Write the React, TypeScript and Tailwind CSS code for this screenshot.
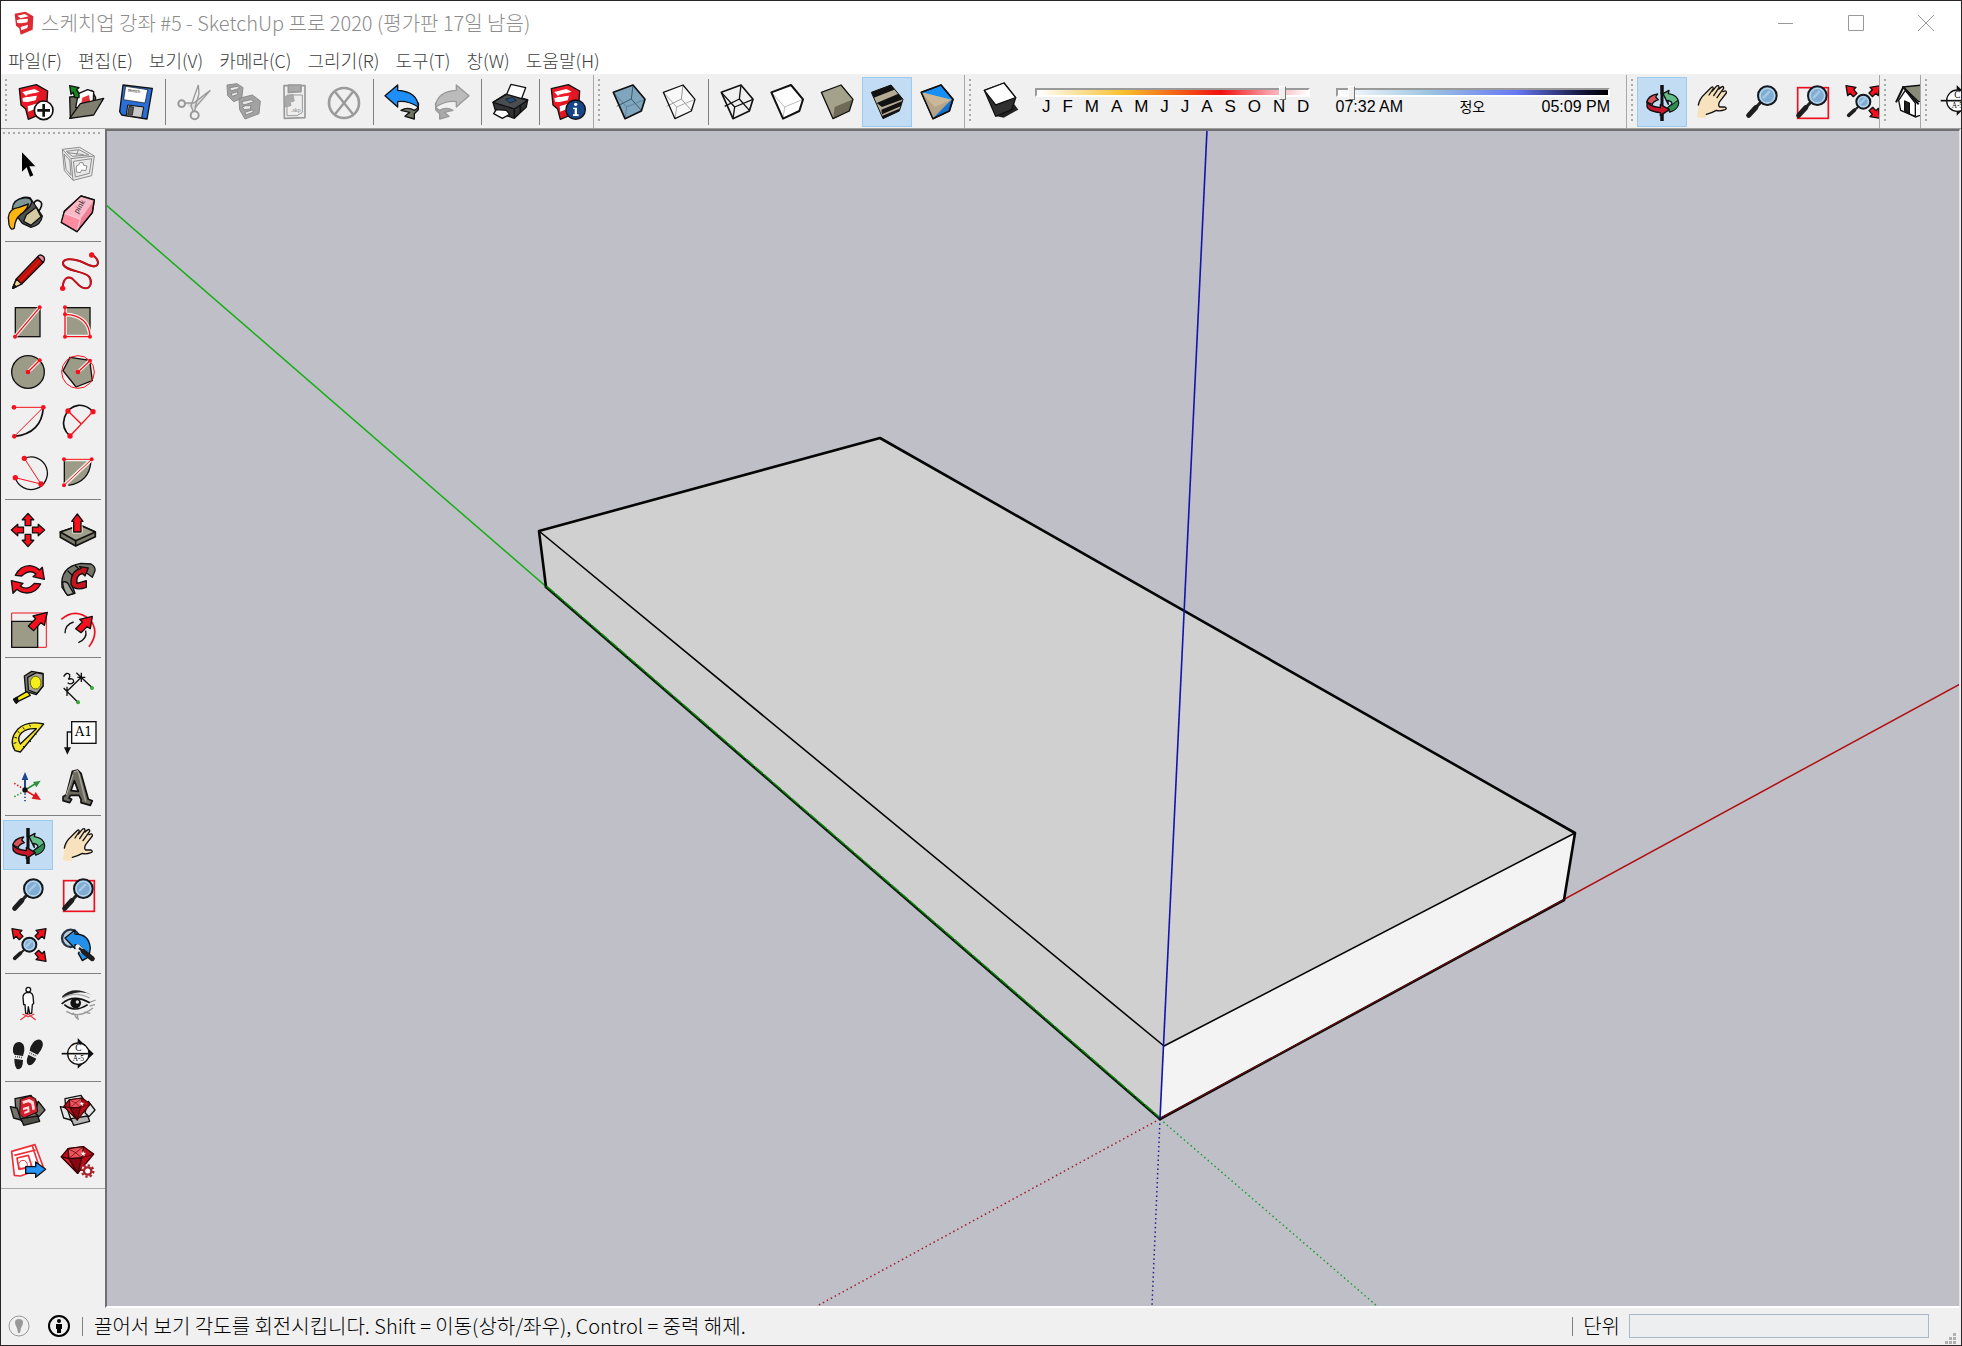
import React from 'react';

type Node = React.ReactNode;

const INK = '#111';
const RED = '#f4101c';
const STONE = '#9c9b87';

function Dot({ x, y, r = 7 }: { x: number; y: number; r?: number }) {
  return <circle cx={x} cy={y} r={r} fill={RED} />;
}

function BlockArrow({ at }: { at: string }) {
  return <path transform={at} d="M0-52 18-32H9V-14H-9V-32H-18Z" fill={RED} stroke={INK} strokeWidth="4" strokeLinejoin="round" />;
}

function SketchLogo({ red = '#f01826', light = '#fff' }: { red?: string; light?: string }) {
  return (
    <g strokeLinejoin="round">
      <path d="M25 35 76 23 110 42 106 104 52 127 44 96 30 84Z" fill={red} stroke={INK} strokeWidth="4" />
      <path d="M76 23 110 42 106 104 52 127 54 70 88 66Z" fill="#000" opacity=".06" />
      <path d="M34 45 70 36 86 44 44 56Z M34 64 46 60 78 56 74 70 50 75 36 74Z M50 88 82 78 80 92 52 104Z" fill={light} />
      <path d="M48 53 66 49 76 54 50 60Z" fill={red} />
    </g>
  );
}

function TitleLogo() {
  return (
    <svg viewBox="0 0 60 72" className="h-6 w-5">
      <path d="M2 8 34 2 58 16 56 56 20 71 16 52 6 44Z" fill="#dd2a33" />
      <path d="M10 14 32 9 44 16 20 22ZM8 28 18 25 42 23 40 34 22 37 10 36ZM20 48 42 41 40 51 22 58Z" fill="#fff" />
    </svg>
  );
}

function Lens({ cx, cy, r, hx, hy, w = 15 }: { cx: number; cy: number; r: number; hx: number; hy: number; w?: number }) {
  const k = 0.72;
  return (
    <g strokeLinecap="round">
      <path d={`M${cx - r * k} ${cy + r * k} L${hx} ${hy}`} stroke="#222" strokeWidth={w * 0.6} />
      <path d={`M${(cx - r * k) * 0.6 + hx * 0.4} ${(cy + r * k) * 0.6 + hy * 0.4} L${hx} ${hy}`} stroke="#1d1d1f" strokeWidth={w} />
      <circle cx={cx} cy={cy} r={r} fill="#82add2" stroke="#17181c" strokeWidth="6" />
      <circle cx={cx} cy={cy} r={r - 6} fill="none" stroke="#b6d6ee" strokeWidth="4" />
      <path d={`M${cx - r * 0.4} ${cy + r * 0.2} L${cx + r * 0.2} ${cy - r * 0.4}`} stroke="#a5cae6" strokeWidth="7" />
    </g>
  );
}

function OutArrow({ at }: { at: string }) {
  return <path transform={at} d="M0 0 30 5 23 12 33 23 22 33 12 23 5 30Z" fill={RED} stroke={INK} strokeWidth="4" strokeLinejoin="round" />;
}

function Cube({ fill, side, lw = 5, back, front, inner = 2 }: { fill: string; side?: string; lw?: number; back?: string; front?: string; inner?: number }) {
  return (
    <g strokeLinejoin="round" fill="none">
      <path d="M28 46 87 24 123 67 112 102 63 125Z" fill={fill} />
      {side && <path d="M68 90 123 67 112 102 63 125Z" fill={side} />}
      {back && <path d="M87 24 82 66 38 88M82 66 112 100" stroke={back} strokeWidth={inner} />}
      {front && <path d="M28 46 68 90 123 67M68 90 63 125" stroke={front} strokeWidth={inner} />}
      <path d="M28 46 87 24 123 67 112 102 63 125Z" stroke={INK} strokeWidth={lw} />
    </g>
  );
}

const boxFlaps = (tone: string, dark: string) => (
  <g stroke={INK} strokeWidth="4" strokeLinejoin="round">
    <path d="M38 66 36 38 84 28 92 40 114 58 104 96 56 106Z" fill={tone} />
    <path d="M22 62 42 66 54 102 32 96Z" fill={tone} />
    <path d="M106 46 126 72 108 92 96 80Z" fill={tone} />
    <path d="M54 98 104 90 110 106 62 118Z" fill={dark} />
  </g>
);

const gem = (
  <g stroke="#3a0205" strokeWidth="4" strokeLinejoin="round">
    <path d="M25 62 45 38 92 32 122 54 74 112Z" fill="#b80e18" />
    <path d="M45 38 92 32 86 66 48 68Z" fill="#f0545a" />
    <path d="M25 62 48 68 74 112Z" fill="#d91f2a" />
    <path d="M48 68 86 66 74 112Z" fill="#8a0710" />
    <path d="M45 38 68 50 92 32M68 50 48 68M68 50 86 66 122 54" fill="none" strokeWidth="2" />
    <path d="M90 44 93 50 99 51 94 55 95 61 90 57 85 60 87 54 83 50 88 50Z" fill="#fff" stroke="none" />
  </g>
);

const orbit = (
  <g strokeLinejoin="round">
    <path d="M75 24V132" stroke={INK} strokeWidth="9" />
    <path d="M78 50 96 40 94 50Q124 54 125 78 122 98 98 105L92 92 104 82Q108 74 92 70L94 82Z" fill="#62bd86" stroke={INK} strokeWidth="4" />
    <path d="M125 78Q124 98 98 105L92 92 104 84 122 70Z" fill="#2f8c53" stroke={INK} strokeWidth="3" />
    <path d="M30 76Q32 56 62 51L56 60 64 68Q48 74 46 82Z" fill="#d8545a" stroke={INK} strokeWidth="4" />
    <path d="M30 72Q34 88 70 92V82L97 98 70 116V107Q30 102 30 86Z" fill="#c9162b" stroke={INK} strokeWidth="4" />
    <path d="M75 24V52M75 110V132" stroke={INK} strokeWidth="9" />
  </g>
);

const hand = (
  <g strokeLinejoin="round" strokeLinecap="round">
    <path d="M30 120Q34 98 34 82 38 64 54 50L72 32Q80 26 78 36L66 54 88 30Q96 22 96 32L80 56 102 32Q110 26 110 34L90 62 112 42Q120 38 118 48L98 74Q92 86 98 90L114 90Q122 94 114 98 98 104 88 100 74 108 58 112L56 124Z" fill="#f8e2bd" />
    <path d="M34 84Q38 64 54 50L72 32Q80 26 78 36L66 54M76 42 88 28Q96 22 96 32L80 56M96 36Q110 22 110 34L90 62M108 44Q120 38 118 48L98 74Q92 86 98 90L114 90Q122 94 114 98 98 104 88 100 74 108 58 112" fill="none" stroke={INK} strokeWidth="4" />
  </g>
);

const zoom = <Lens cx={91} cy={56} r={28} hx={35} hy={115} />;

const zoomWindow = (
  <g>
    <rect x="32" y="32" width="92" height="92" fill="none" stroke="#ee1020" strokeWidth="5" />
    <Lens cx={91} cy={56} r={28} hx={35} hy={115} />
  </g>
);

const extents = (
  <g>
    <Lens cx={79} cy={74} r={21} hx={35} hy={115} w={11} />
    <OutArrow at="translate(27 26)" />
    <OutArrow at="translate(129 26) rotate(90)" />
    <OutArrow at="translate(129 124) rotate(180)" />
  </g>
);

const section = (
  <g>
    <path d="M74 30 122 77 74 122Z" fill={INK} />
    <circle cx="76" cy="77" r="32" fill="#fff" stroke={INK} strokeWidth="4" />
    <path d="M26 77H118" stroke={INK} strokeWidth="5" />
    <text x="76" y="70" textAnchor="middle" fontSize="28" fontFamily="Liberation Serif, serif">C</text>
    <text x="76" y="100" textAnchor="middle" fontSize="22" fontFamily="Liberation Serif, serif">A-5</text>
  </g>
);

const stripes = (
  <g>
    <clipPath id="cubeClip"><path d="M28 46 87 24 123 67 112 102 63 125Z" /></clipPath>
    <g clipPath="url(#cubeClip)">
      <path d="M20 20H130V130H20Z" fill="#b3ab94" />
      <path d="M20 46 96 17 108 34 32 64ZM44 78 113 49 124 66 60 90ZM58 98 130 68V82L60 112ZM58 118 124 90 120 100 60 128Z" fill={INK} />
    </g>
    <path d="M28 46 87 24 123 67 112 102 63 125Z" fill="none" stroke={INK} strokeWidth="3" />
  </g>
);

const ICONS: Record<string, Node> = {
  select: <path d="M57 43V101L71 88 81 116 91 112 79 85H97Z" fill="#000" />,
  component: (
    <g fill="none" stroke="#8c8c8c" strokeWidth="3" strokeLinejoin="round">
      <path d="M28 34 80 28 124 54 116 113 60 127 34 98Z" fill="#e9e9e9" />
      <path d="M28 34 54 62 124 54M54 62 60 127M61 70 116 62 109 106 67 117ZM40 40 78 35 108 51 58 55ZM33 48 50 66 54 112 39 94Z" />
      <path d="M70 84 78 80 80 74H90L92 82 102 84 98 98 86 96 82 104 70 102Z" fill="#fff" />
      <path d="M44 44 92 50M76 36 70 52" />
    </g>
  ),
  paint: (
    <g stroke={INK} strokeWidth="4" strokeLinejoin="round">
      <path d="M90 54Q94 34 108 38 122 44 112 62L98 82" fill="none" strokeWidth="5" />
      <path d="M36 44Q58 22 82 30L118 84Q114 112 84 118L58 106 34 74Z" fill="#4d5150" />
      <path d="M70 80 100 58 114 86 84 112 62 100Z" fill="#d4cba2" />
      <path d="M28 62Q30 34 62 30 88 28 86 44 78 66 48 76Z" fill="#7e9797" />
      <path d="M16 88Q18 62 48 58L76 48Q72 68 52 80 36 92 34 120 24 130 18 110Z" fill="#ffb510" />
    </g>
  ),
  eraser: (
    <g stroke={INK} strokeWidth="4" strokeLinejoin="round">
      <path d="M84 24 124 36 118 74 72 131 25 103 34 70Z" fill="#ee7f95" />
      <path d="M84 24 124 36 82 94 34 76Z" fill="#fbb9c8" stroke="none" />
      <path d="M34 76 82 94 72 131 25 103Z" fill="#ff8ba1" stroke="#fff" strokeWidth="2" />
      <path d="M84 24 124 36 118 74 72 131 25 103 34 70Z" fill="none" />
      <text transform="translate(74 78) rotate(-58)" fontSize="25" stroke="none" fill="#222" fontFamily="Liberation Serif, serif">pink</text>
    </g>
  ),
  pencil: (
    <g stroke={INK} strokeWidth="4" strokeLinejoin="round">
      <path d="M29 127 40 99 104 32 122 48 56 114Z" fill="#d3150c" />
      <path d="M29 127 40 99 56 114Z" fill="#f1d49b" />
      <path d="M29 127 33 116 40 122Z" fill={INK} />
      <path d="M46 103 110 38M54 110 118 44" strokeWidth="2" stroke="#7b0500" />
      <path d="M104 32Q112 22 122 32 128 42 120 49Z" fill="#e889a0" />
    </g>
  ),
  freehand: (
    <g>
      <path d="M29 127C30 95 45 90 58 98 70 108 80 127 97 127 115 127 118 105 108 92 95 75 30 75 30 52 30 35 60 38 80 45 100 52 120 68 132 58 140 48 130 32 116 27" fill="none" stroke="#8a0d14" strokeWidth="6" />
      <path d="M29 127C30 95 45 90 58 98 70 108 80 127 97 127 115 127 118 105 108 92 95 75 30 75 30 52 30 35 60 38 80 45 100 52 120 68 132 58 140 48 130 32 116 27" fill="none" stroke="#d8101c" strokeWidth="4" />
      <Dot x={29} y={127} r={8} /><Dot x={116} y={27} r={8} />
    </g>
  ),
  rectangle: (
    <g>
      <rect x="37" y="35" width="74" height="87" fill={STONE} stroke={INK} strokeWidth="4" />
      <path d="M36 122 110 34" stroke="#f5f0ea" strokeWidth="11" />
      <path d="M36 122 110 34" stroke={RED} strokeWidth="4" />
      <Dot x={36} y={122} r={6} /><Dot x={110} y={34} r={6} />
    </g>
  ),
  rotatedRect: (
    <g fill="none">
      <rect x="37" y="35" width="74" height="87" fill={STONE} stroke={INK} strokeWidth="4" />
      <path d="M36 34V122H111Q108 58 36 55" stroke="#f5f0ea" strokeWidth="11" />
      <path d="M36 34V122H111Q108 58 36 55" stroke={RED} strokeWidth="4" />
      <Dot x={36} y={34} r={6} /><Dot x={36} y={55} r={6} /><Dot x={36} y={122} r={6} /><Dot x={111} y={122} r={6} />
    </g>
  ),
  circle: (
    <g>
      <circle cx="75" cy="78" r="49" fill={STONE} stroke={INK} strokeWidth="4" />
      <path d="M75 78 110 43" stroke="#f5f0ea" strokeWidth="11" />
      <path d="M75 78 110 43" stroke={RED} strokeWidth="4" />
      <Dot x={75} y={78} /><Dot x={110} y={43} r={6} />
    </g>
  ),
  polygon: (
    <g>
      <path d="M51 34 110 43 118 104 69 123 30 74Z" fill={STONE} stroke={INK} strokeWidth="4" />
      <circle cx="75" cy="78" r="49" fill="none" stroke={RED} strokeWidth="3" />
      <path d="M75 78 111 44" stroke="#f5f0ea" strokeWidth="11" />
      <path d="M75 78 111 44" stroke={RED} strokeWidth="4" />
      <Dot x={75} y={78} /><Dot x={111} y={44} r={6} />
    </g>
  ),
  arc: (
    <g fill="none">
      <path d="M121 34Q116 112 34 121" stroke={INK} strokeWidth="5" />
      <path d="M33 34H121L34 121" stroke={RED} strokeWidth="3" />
      <Dot x={33} y={34} /><Dot x={121} y={34} /><Dot x={34} y={121} />
    </g>
  ),
  twoPointArc: (
    <g fill="none">
      <path d="M51 120C14 88 36 32 76 28 96 26 108 34 120 47" stroke={INK} strokeWidth="5" />
      <path d="M45 45 84 83M120 47 51 120" stroke={RED} strokeWidth="4" />
      <Dot x={45} y={45} r={8} /><Dot x={120} y={47} r={8} /><Dot x={51} y={120} r={8} />
    </g>
  ),
  threePointArc: (
    <g fill="none">
      <path d="M64 37A49 49 0 1 1 37 95" stroke={INK} strokeWidth="4" />
      <path d="M64 37 114 114 37 95" stroke={RED} strokeWidth="3" />
      <Dot x={64} y={37} r={8} /><Dot x={114} y={114} r={8} /><Dot x={37} y={95} r={8} />
    </g>
  ),
  pie: (
    <g fill="none">
      <path d="M35 44H114Q110 108 46 118L35 112Z" fill={STONE} />
      <path d="M114 44Q110 108 46 118M34 44V112" stroke={INK} strokeWidth="4" />
      <path d="M33 118 116 40H33" stroke="#f5f0ea" strokeWidth="11" />
      <path d="M33 118 116 40H33" stroke={RED} strokeWidth="3" />
      <Dot x={33} y={118} r={6} /><Dot x={116} y={40} r={6} /><Dot x={33} y={40} r={6} />
    </g>
  ),
  move: (
    <g>
      <BlockArrow at="translate(75 78) scale(.96)" />
      <BlockArrow at="translate(75 78) rotate(90) scale(.96)" />
      <BlockArrow at="translate(75 78) rotate(180) scale(.96)" />
      <BlockArrow at="translate(75 78) rotate(270) scale(.96)" />
    </g>
  ),
  pushPull: (
    <g stroke={INK} strokeWidth="5" strokeLinejoin="round">
      <path d="M22 84 82 64 127 84V98L68 126 22 100Z" fill="#7b7b6a" />
      <path d="M22 84 82 64 127 84 68 110Z" fill="#a09f8c" />
      <path d="M68 110V126" />
      <path d="M73 30 90 52H84V84H62V52H56Z" fill={RED} stroke="#f4f0ea" strokeWidth="9" />
      <path d="M73 30 90 52H84V84H62V52H56Z" fill={RED} strokeWidth="4" />
    </g>
  ),
  rotate: (
    <g fill={RED} stroke={INK} strokeWidth="4" strokeLinejoin="round">
      <path d="M37 64Q52 34 82 35 100 38 110 48L118 40 124 76 90 68 99 60Q80 44 56 66Z" />
      <path d="M113 90Q100 116 72 117 52 116 42 106L30 118 25 80 60 88 52 96Q72 112 94 88Z" />
    </g>
  ),
  followMe: (
    <g stroke={INK} strokeWidth="4" strokeLinejoin="round">
      <path d="M27 100Q20 38 84 28L114 30Q128 38 126 50L118 70 102 58Q62 56 58 96L66 118 44 124Z" fill="#74766b" />
      <path d="M54 92Q52 50 84 44L80 38 106 42 96 66 88 58Q68 64 72 88L100 80V100Q66 112 54 92Z" fill="#c3161e" />
      <path d="M44 50 60 66M66 34 78 46" fill="none" />
      <path d="M29 84Q42 80 48 94L62 118 44 124Q30 110 29 84Z" fill="#a4a49c" />
    </g>
  ),
  scale: (
    <g strokeLinejoin="round">
      <rect x="26" y="27" width="104" height="103" fill="none" stroke={RED} strokeWidth="3" />
      <rect x="26" y="52" width="78" height="78" fill={STONE} stroke={INK} strokeWidth="4" />
      <path d="M133 25 124 64 114 56 92 80 76 66 98 44 90 36Z" fill={RED} stroke={INK} strokeWidth="4" />
    </g>
  ),
  offset: (
    <g fill="none" strokeLinejoin="round">
      <path d="M25 46Q66 10 110 46 142 84 108 128" stroke="#ee1020" strokeWidth="5" />
      <path d="M36 88Q36 62 62 54M98 80Q104 104 76 116" stroke={INK} strokeWidth="4" />
      <path d="M118 37 112 74 102 68 84 86 68 74 88 54 80 46Z" fill={RED} stroke={INK} strokeWidth="4" />
    </g>
  ),
  tape: (
    <g stroke={INK} strokeWidth="4" strokeLinejoin="round">
      <path d="M32 112 72 88 82 100 38 122Z" fill="#f4e90b" />
      <path d="M32 112 42 106 46 118 40 124Z" fill={INK} />
      <path d="M64 42 86 28 120 34V72L100 98 68 88Z" fill="#7c7c72" />
      <path d="M74 46 100 32 120 36V72L102 94 76 84Z" fill="#a3a399" />
      <ellipse cx="98" cy="62" rx="16" ry="19" fill="#f4ef19" stroke="#6b6b00" strokeWidth="3" />
    </g>
  ),
  dimension: (
    <g stroke={INK} strokeWidth="4" fill="none">
      <path d="M42 88 85 46M34 80 74 120M70 32 116 76M32 78 52 98M42 74V102M73 46H97M85 32V60" />
      <path d="M32 44Q40 28 50 38 52 46 46 52 62 46 62 60 54 70 44 62" strokeWidth="4" />
      <circle cx="75" cy="121" r="6" fill="#3ca53c" stroke="none" /><circle cx="117" cy="78" r="6" fill="#3ca53c" stroke="none" />
    </g>
  ),
  protractor: (
    <g stroke={INK} strokeWidth="4" strokeLinejoin="round">
      <path fillRule="evenodd" d="M122 36Q72 24 44 52 16 84 36 116L52 120ZM100 50 52 96Q40 78 56 62 72 48 100 50Z" fill="#f3e52a" />
      <path d="M44 58 50 63M34 76 42 78M32 94 40 92M60 46 64 52M80 38 82 44M60 102 66 108M78 84 84 90M96 64 100 68" strokeWidth="3" />
    </g>
  ),
  text: (
    <g>
      <rect x="56" y="29" width="73" height="65" fill="#fff" stroke={INK} strokeWidth="4" />
      <path d="M56 60H43V110" fill="none" stroke={INK} strokeWidth="4" />
      <path d="M33 106H54L43 128Z" fill={INK} />
      <text x="92" y="72" textAnchor="middle" fontSize="38" fontFamily="DejaVu Serif, serif">A1</text>
    </g>
  ),
  axes: (
    <g fill="none" strokeWidth="5">
      <path d="M66 84V44" stroke="#1e4693" strokeWidth="6" /><path d="M66 30 76 54H56Z" fill="#1e4693" />
      <path d="M66 84 100 64" stroke="#2e8f3c" /><path d="M113 56 100 76 90 60Z" fill="#2e8f3c" />
      <path d="M66 84 98 104" stroke="#e0141e" /><path d="M114 114 86 110 98 90Z" fill="#e0141e" />
      <path d="M34 64 60 80" stroke="#e0141e" strokeDasharray="4 6" />
      <path d="M34 104 60 90" stroke="#2e8f3c" strokeDasharray="4 6" />
      <path d="M66 94V124" stroke="#1e4693" strokeDasharray="4 6" />
      <circle cx="66" cy="84" r="8" fill={INK} />
    </g>
  ),
  text3d: (
    <g stroke={INK} strokeWidth="5" strokeLinejoin="round">
      <path fillRule="evenodd" d="M58 28 74 24 84 34 106 112 118 116 112 130 84 122V112L78 100H52L48 108 56 112 50 122 30 116V104L40 98ZM64 56 54 86 76 88Z" fill="#6d6b60" />
      <path d="M62 30 74 26 78 36 98 118M40 100 60 38" fill="none" stroke="#aaa89a" strokeWidth="4" />
    </g>
  ),
  orbit,
  hand,
  zoom,
  zoomWindow,
  extents,
  previous: (
    <g strokeLinejoin="round">
      <circle cx="53" cy="55" r="26" fill="#b9cde0" stroke="#2b3440" strokeWidth="7" />
      <path d="M36 54 66 30V42Q108 42 112 84L108 110 88 122 76 100 86 84Q80 74 66 74V86Z" fill="#2390ea" stroke={INK} strokeWidth="4" />
      <path d="M74 80 88 94" stroke="#f0f0f0" strokeWidth="14" strokeLinecap="round" />
      <path d="M78 84 88 92" stroke="#222" strokeWidth="7" />
      <path d="M90 94 118 116" stroke="#1d1d1f" strokeWidth="15" strokeLinecap="round" />
    </g>
  ),
  person: (
    <g stroke={INK} strokeWidth="4" strokeLinejoin="round" fill="none">
      <path d="M52 126 76 108 98 126M58 108 76 116 94 108" stroke="#e84048" />
      <path d="M70 44Q60 48 60 58L62 80H66L68 106H74L76 86 80 106H86L88 80 92 76 90 54Q88 46 82 44Z" fill="#fff" />
      <circle cx="76" cy="35" r="7" fill="#fff" />
    </g>
  ),
  eye: (
    <g fill="none">
      <path d="M40 100Q78 124 120 90M60 104 72 122M72 110 76 126M94 102 112 106M108 74 128 66M110 84 126 80" stroke="#999" strokeWidth="4" />
      <path d="M28 54Q62 20 118 52 86 34 48 50L28 60Z" fill="#222" />
      <path d="M30 60Q66 38 110 60" stroke="#aaa" strokeWidth="4" />
      <path d="M30 76Q66 44 104 76 76 108 48 92Z" fill="#e8e8e8" />
      <path d="M26 78Q60 46 110 74M34 80Q64 106 104 80" stroke={INK} strokeWidth="5" />
      <circle cx="68" cy="75" r="16" fill={INK} /><circle cx="73" cy="72" r="5" fill="#ddd" />
    </g>
  ),
  walk: (
    <g fill="#1c1c1c">
      <path d="M30 60Q34 40 50 42 66 46 64 68L60 84 34 80Q28 72 30 60ZM34 92 60 96Q60 122 46 124 34 122 34 92Z" />
      <path d="M94 40Q106 30 116 38 124 48 114 66L104 80 80 68Q82 52 94 40ZM76 80 100 92Q90 112 78 112 66 106 76 80Z" />
      <path d="M36 86 60 89M79 74 101 85" stroke="#555" strokeWidth="5" strokeDasharray="3 3" />
    </g>
  ),
  section,
  warehouse: (
    <g>
      {boxFlaps('#74746a', '#50504a')}
      <path d="M52 40 80 30 98 38 104 78 62 96 50 84Z" fill="#d51f2c" stroke={INK} strokeWidth="3" />
      <path d="M58 46 78 39 92 46 96 70 88 73 85 53 76 49 60 54ZM60 66 78 60 80 78 64 84V77L73 74V69L60 73Z" fill="#fbdcdc" />
    </g>
  ),
  extensionWarehouse: (
    <g>{boxFlaps('#e4e4e4', '#b4b4b4')}<g transform="translate(12 10) scale(.82)">{gem}</g></g>
  ),
  layout: (
    <g strokeLinejoin="round">
      <path d="M26 46 96 26 122 96 52 120 34 118Z" fill="#fff" stroke="#ee3038" strokeWidth="5" />
      <path d="M34 58 98 42M88 30 108 90M42 66 76 58 86 90 48 100Z" fill="none" stroke="#ee3038" strokeWidth="5" />
      <circle cx="60" cy="86" r="13" fill="none" stroke="#ee3038" strokeWidth="3" />
      <path d="M68 92H98V78L128 100 98 124V112H68Z" fill="#2592f5" stroke={INK} strokeWidth="4" />
    </g>
  ),
  extensions: (
    <g>
      {gem}
      <circle cx="104" cy="105" r="20" fill="#f0f0f0" />
      <circle cx="104" cy="105" r="17" fill="none" stroke="#a3222b" strokeWidth="7" strokeDasharray="7 6" />
      <circle cx="104" cy="105" r="11" fill="#fff" stroke="#a3222b" strokeWidth="7" />
    </g>
  ),
  new: (
    <g><SketchLogo /><circle cx="98" cy="100" r="28" fill="#fff" stroke={INK} strokeWidth="5" /><path d="M98 81V119M79 100H117" stroke={INK} strokeWidth="8" /></g>
  ),
  open: (
    <g stroke={INK} strokeWidth="4" strokeLinejoin="round">
      <path d="M26 60 50 58 54 50 92 40 104 62 98 100 28 124Z" fill="#6f6f62" />
      <path d="M52 50 80 38 98 44 96 92H44Z" fill="#fff" />
      <path d="M64 62 84 54 88 78 60 84Z" fill="#ea3037" stroke="none" />
      <path d="M26 124 58 80 128 64 98 114Z" fill="#807f70" />
      <path d="M26 26 54 32 46 38Q56 46 54 62H42L36 46 30 52Z" fill="#128a1c" />
    </g>
  ),
  save: (
    <g stroke={INK} strokeWidth="4" strokeLinejoin="round">
      <path d="M36 24 124 34 108 126 32 114 26 104Z" fill="#2a6fd8" />
      <path d="M44 28 110 38 102 78 38 68Z" fill="#fff" strokeWidth="2" />
      <text transform="translate(50 43) rotate(8)" fontSize="13" stroke="none" fontFamily="Liberation Sans, sans-serif">sketch</text>
      <path d="M50 84 98 90 92 122 46 116Z" fill="#c9c9c9" strokeWidth="3" />
      <path d="M54 88 68 90 64 115 50 113Z" fill="#555" strokeWidth="2" />
    </g>
  ),
  cut: (
    <g fill="none" stroke="#999" strokeWidth="6">
      <circle cx="38" cy="80" r="10" /><circle cx="77" cy="115" r="12" />
      <path d="M48 78 74 78 124 40 82 88 76 102" fill="#ddd" strokeWidth="4" /><path d="M88 24 66 86 72 102M88 24 90 50 78 92" strokeWidth="4" />
    </g>
  ),
  copy: (
    <g stroke="#8b8b8b" strokeWidth="3" fill="#a2a2a2" strokeLinejoin="round">
      <path d="M24 24 54 20 72 32 68 64 44 74 26 56Z" /><path d="M32 32 56 28 62 34 36 42ZM36 50 56 44V52L40 58Z" fill="#e9e9e9" />
      <path d="M60 64 100 54 124 72 120 110 78 126 62 98Z" /><path d="M68 74 96 68 106 74 74 84ZM70 90 80 86H96L94 96 76 98ZM78 106 102 98V106L80 114Z" fill="#e9e9e9" />
    </g>
  ),
  paste: (
    <g stroke="#999" strokeWidth="5" fill="#eee" strokeLinejoin="round">
      <path d="M45 26H108V122L46 124Z" /><path d="M58 24H96V44L58 46Z" fill="#aaa" />
      <path d="M54 54H100V106L84 116H54Z" strokeWidth="3" /><path d="M46 60 72 52 76 72 64 76 66 86 48 90Z" fill="#aaa" strokeWidth="2" />
      <text x="66" y="106" fontSize="18" stroke="none" fill="#888" fontFamily="Liberation Serif, serif">.skp</text>
    </g>
  ),
  remove: (
    <g stroke="#9b9b9b" strokeWidth="8" fill="none"><circle cx="75" cy="78" r="45" /><path d="M48 44 102 112M102 44 48 112" stroke="#999" strokeWidth="7" /></g>
  ),
  undo: (
    <g stroke={INK} strokeWidth="4" strokeLinejoin="round">
      <path d="M112 100Q128 92 124 78V98L112 110V126L84 118 98 106 72 100Q92 88 112 100Z" fill="#6f7665" />
      <path d="M24 56 62 24V40Q122 44 124 90 92 70 62 74V90Z" fill="#1e8ff8" />
    </g>
  ),
  redo: (
    <g stroke="#999" strokeWidth="4" strokeLinejoin="round">
      <path d="M38 100Q22 92 26 78V98L38 110V126L66 118 52 106 78 100Q58 88 38 100Z" fill="#aaa" />
      <path d="M126 56 88 24V40Q28 44 26 90 58 70 88 74V90Z" fill="#bbb" />
    </g>
  ),
  print: (
    <g stroke={INK} strokeWidth="4" strokeLinejoin="round">
      <path d="M24 76 62 52 128 68 124 90 88 124 32 104Z" fill="#333" />
      <path d="M64 54 78 22 122 32 108 70Z" fill="#fff" />
      <path d="M24 76 64 52 128 70 88 96Z" fill="#4a4d50" /><path d="M62 66 82 62 94 70 74 78Z" fill="#24507e" strokeWidth="2" />
      <path d="M34 98 64 100 74 112 52 124 26 110Z" fill="#fff" />
      <path d="M88 98V122M106 86V106" strokeWidth="5" />
    </g>
  ),
  info: (
    <g>
      <SketchLogo />
      <circle cx="98" cy="98" r="29" fill="#164588" stroke={INK} strokeWidth="4" />
      <circle cx="98" cy="82" r="5" fill="#fff" /><path d="M90 92H102V112H107V117H90V112H95V96H90Z" fill="#fff" />
    </g>
  ),
  xray: <Cube fill="#7fa5bf" back="#1d3440" front="#4f7286" />,
  backEdges: <Cube fill="#f8f8f8" lw={4} front="#aaa" back="#999" inner={3} />,
  wireframe: <Cube fill="none" back={INK} front={INK} lw={5} inner={4} />,
  hidden: <Cube fill="#fff" lw={6} front="#999" />,
  shaded: <Cube fill="#a5a28b" side="#6e6a57" lw={4} />,
  textured: stripes,
  mono: (
    <g strokeLinejoin="round">
      <Cube fill="#1690f5" side="#1374d0" />
      <path d="M28 46 118 68 63 124Z" fill="#b5a48a" /><path d="M28 46 118 68 68 90Z" fill="#c9b797" />
      <path d="M28 46 87 24 123 67 112 102 63 125Z" fill="none" stroke={INK} strokeWidth="4" />
    </g>
  ),
  shadow: (
    <g strokeLinejoin="round">
      <path d="M66 124 86 128 130 104 118 88Z" fill="#222" />
      <path d="M28 46 87 24 122 68 110 104 62 124Z" fill="#303030" stroke={INK} strokeWidth="4" />
      <path d="M28 46 87 24 122 68 62 90Z" fill="#fff" stroke={INK} strokeWidth="4" />
    </g>
  ),
  house: (
    <g stroke={INK} strokeWidth="4" strokeLinejoin="round">
      <path d="M52 60 84 44 140 60V108L88 126 48 106Z" fill="#fff" />
      <path d="M50 36 110 30 150 70 98 80 60 44Z" fill="#8a8a78" />
      <path d="M38 76 58 46 88 84V124L44 106Z" fill="#fff" />
      <path d="M30 82 52 36 98 88" fill="none" strokeWidth="6" />
      <path d="M56 78 70 84V116L56 108Z" fill="#222" />
    </g>
  ),
};

function Tool({ icon, label, active }: { icon: string; label: string; active?: boolean }) {
  return (
    <button
      type="button"
      title={label}
      aria-label={label}
      className={`h-[50px] w-[50px] shrink-0 border ${active ? 'border-[#9ccbee] bg-[#c2dcf3]' : 'border-transparent'}`}
    >
      <svg viewBox="0 0 150 150" className="-m-px h-[50px] w-[50px] max-w-none">{ICONS[icon]}</svg>
    </button>
  );
}

function Sep() {
  return <div className="ml-1 mr-[3px] h-[46px] w-px shrink-0 self-center bg-[#808080]" />;
}

function Grip() {
  return <div className="my-1 w-[2px] shrink-0 self-stretch bg-[repeating-linear-gradient(to_bottom,#aaa_0_2px,transparent_2px_5px)]" />;
}

const BAR = 'flex items-center border-r border-[#a8a8a8]';

const MENUS = ['파일(F)', '편집(E)', '보기(V)', '카메라(C)', '그리기(R)', '도구(T)', '창(W)', '도움말(H)'];
const MONTHS = ['J', 'F', 'M', 'A', 'M', 'J', 'J', 'A', 'S', 'O', 'N', 'D'];

const SIDE: [string, string][][] = [
  [['select', '선택'], ['component', '구성요소 만들기'], ['paint', '페인트'], ['eraser', '지우개']],
  [['pencil', '선'], ['freehand', '자유곡선'], ['rectangle', '직사각형'], ['rotatedRect', '회전된 직사각형'], ['circle', '원'], ['polygon', '다각형'], ['arc', '호'], ['twoPointArc', '2점 호'], ['threePointArc', '3점 호'], ['pie', '파이']],
  [['move', '이동'], ['pushPull', '밀기/끌기'], ['rotate', '회전'], ['followMe', '따라가기'], ['scale', '배율'], ['offset', '오프셋']],
  [['tape', '줄자'], ['dimension', '치수'], ['protractor', '각도기'], ['text', '텍스트'], ['axes', '축'], ['text3d', '3D 텍스트']],
  [['orbit', '궤도'], ['hand', '이동'], ['zoom', '확대/축소'], ['zoomWindow', '확대/축소 창'], ['extents', '범위 확대'], ['previous', '이전']],
  [['person', '카메라 배치'], ['eye', '둘러보기'], ['walk', '이동'], ['section', '단면']],
  [['warehouse', '3D Warehouse'], ['extensionWarehouse', 'Extension Warehouse'], ['layout', 'LayOut'], ['extensions', '확장 프로그램']],
];

const RANGE =
  'block h-[14px] w-full appearance-none bg-transparent [&::-webkit-slider-runnable-track]:h-[9px] [&::-webkit-slider-runnable-track]:border-2 [&::-webkit-slider-runnable-track]:border-t-[#9a9a9a] [&::-webkit-slider-runnable-track]:border-l-[#9a9a9a] [&::-webkit-slider-runnable-track]:border-r-white [&::-webkit-slider-runnable-track]:border-b-white [&::-webkit-slider-thumb]:-mt-1 [&::-webkit-slider-thumb]:h-[14px] [&::-webkit-slider-thumb]:w-[7px] [&::-webkit-slider-thumb]:appearance-none [&::-webkit-slider-thumb]:border [&::-webkit-slider-thumb]:border-t-white [&::-webkit-slider-thumb]:border-l-white [&::-webkit-slider-thumb]:border-r-[#777] [&::-webkit-slider-thumb]:border-b-[#777] [&::-webkit-slider-thumb]:bg-[#f0f0f0]';

function Toolbars() {
  return (
    <div className="flex h-[54px] shrink-0 overflow-hidden bg-[#f0f0f0] pl-1 pt-px">
      <div className={BAR}>
        <Grip />
        <div className="flex items-center pl-1">
          <Tool icon="new" label="새로 만들기" /><Tool icon="open" label="열기" /><Tool icon="save" label="저장" /><Sep />
          <Tool icon="cut" label="잘라내기" /><Tool icon="copy" label="복사" /><Tool icon="paste" label="붙여넣기" /><Tool icon="remove" label="삭제" /><Sep />
          <Tool icon="undo" label="실행 취소" /><Tool icon="redo" label="다시 실행" /><Sep />
          <Tool icon="print" label="인쇄" /><Sep />
          <Tool icon="info" label="모델 정보" />
        </div>
      </div>
      <div className={`${BAR} pl-1`}>
        <Grip />
        <div className="flex items-center pl-1 pr-[2px]">
          <Tool icon="xray" label="X선" /><Tool icon="backEdges" label="뒷면 모서리" /><Sep />
          <Tool icon="wireframe" label="와이어프레임" /><Tool icon="hidden" label="숨은선" /><Tool icon="shaded" label="음영" />
          <Tool icon="textured" label="텍스처 음영" active /><Tool icon="mono" label="단색" />
        </div>
      </div>
      <div className={`${BAR} min-w-0 flex-1 pl-1`}>
        <Grip />
        <div className="pl-1"><Tool icon="shadow" label="그림자 표시" /></div>
        <div className="ml-[10px] flex min-w-0 flex-1 gap-[26px] self-start pr-4 pt-[10px]">
          <div className="min-w-0 flex-1">
            <input type="range" aria-label="날짜" min={0} max={100} defaultValue={92} className={`${RANGE} [&::-webkit-slider-runnable-track]:bg-[linear-gradient(to_right,#fff,#f6c02c_32%,#f46a18_50%,#f01010_68%,#f9a0a8_86%,#fff)]`} />
            <div className="flex justify-between pl-[7px] font-['Liberation_Sans',sans-serif] text-[17px] leading-4 text-black">
              {MONTHS.map((m, i) => <span key={i}>{m}</span>)}
            </div>
          </div>
          <div className="min-w-0 flex-1">
            <input type="range" aria-label="시간" min={0} max={100} defaultValue={4} className={`${RANGE} [&::-webkit-slider-runnable-track]:bg-[linear-gradient(to_right,#fff,#9cc3e0_34%,#6878f4_66%,#101030_92%,#000)]`} />
            <div className="flex justify-between whitespace-nowrap font-['Liberation_Sans','Noto_Sans_CJK_KR',sans-serif] text-base leading-4 text-black">
              <span>07:32 AM</span><span className="text-sm leading-4">정오</span><span>05:09 PM</span>
            </div>
          </div>
        </div>
      </div>
      <div className={`${BAR} pl-1`}>
        <Grip />
        <div className="flex w-[246px] overflow-hidden pl-1">
          <Tool icon="orbit" label="궤도" active /><Tool icon="hand" label="화면 이동" /><Tool icon="zoom" label="확대/축소" />
          <Tool icon="zoomWindow" label="확대/축소 창" /><Tool icon="extents" label="범위 확대" />
        </div>
      </div>
      <div className={`${BAR} pl-1`}>
        <Grip />
        <div className="w-[34px] overflow-hidden"><Tool icon="house" label="등각 투영" /></div>
      </div>
      <div className="flex items-center pl-1">
        <Grip />
        <div className="w-[34px] overflow-hidden pl-[5px]"><Tool icon="section" label="단면 평면" /></div>
      </div>
    </div>
  );
}

function Sidebar() {
  return (
    <nav aria-label="대형 도구 세트" className="w-[104px] shrink-0 bg-[#f0f0f0]">
      <div className="border-b border-[#a8a8a8] pb-[2px] pl-[2px] pt-[3px]">
        <div className="mb-1 mr-1 h-[2px] bg-[repeating-linear-gradient(to_right,#aaa_0_2px,transparent_2px_5px)]" />
        {SIDE.map((group, i) => (
          <div key={i}>
            {i > 0 && <div className="mb-1 ml-[2px] mr-1 mt-[2px] border-b border-b-[#808080] pb-px" />}
            <div className="grid grid-cols-[50px_50px]">
              {group.map(([icon, label]) => <Tool key={icon} icon={icon} label={label} active={icon === 'orbit'} />)}
            </div>
          </div>
        ))}
      </div>
    </nav>
  );
}

function Model() {
  return (
    <svg viewBox="107 131 1852 1175" preserveAspectRatio="xMidYMid slice" className="absolute inset-0 h-full w-full" role="img" aria-label="모델">
      <g fill="none" strokeWidth="1.5">
        <path d="M106 205 1160 1119" stroke="#16ae16" />
        <path d="M1160 1119 1960 684" stroke="#b01010" />
        <path d="M1160 1119 817 1306" stroke="#a01c28" strokeDasharray="1.5 3" />
        <path d="M1160 1119 1377 1306" stroke="#1f9c2c" strokeDasharray="1.5 3" />
        <path d="M1160 1119 1152 1306" stroke="#20208c" strokeDasharray="1.5 3" />
      </g>
      <path d="M539 531 880 438 1575 833 1164 1046Z" fill="#d0d0d0" />
      <path d="M539 531 1164 1046 1160 1119 546 587Z" fill="#cfcfcf" />
      <path d="M1164 1046 1575 833 1564 900 1160 1119Z" fill="#f3f3f3" />
      <g fill="none" stroke="#050505" strokeLinejoin="round" strokeLinecap="round">
        <path d="M539 531 1164 1046 1575 833" strokeWidth="1.6" />
        <path d="M546 587 539 531 880 438 1575 833 1564 900" strokeWidth="2.6" />
        <path d="M546 587 1160 1119" stroke="#0a220a" strokeWidth="2.6" />
        <path d="M547 586.500 1161 1118.500" stroke="#0f8a0f" strokeWidth="1.4" strokeDasharray="9 3" />
        <path d="M1160 1119 1564 900" stroke="#0a0505" strokeWidth="2.6" />
        <path d="M1160 1118.500 1564 899.500" stroke="#7c0c0c" strokeWidth="1" />
      </g>
      <path d="M1207 130 1160 1119" stroke="#1414a8" strokeWidth="1.600" />
    </svg>
  );
}

export default function App() {
  return (
    <div className="flex h-screen flex-col border border-[#2b2528] bg-[#f0f0f0] font-['Noto_Sans_CJK_KR',sans-serif]">
      <header className="bg-white">
        <div className="flex h-[44px] items-center pl-[13px]">
          <TitleLogo />
          <h1 className="ml-[7px] whitespace-nowrap text-xl font-light text-[#8c8c8c]">스케치업 강좌 #5 - SketchUp 프로 2020 (평가판 17일 남음)</h1>
          <div className="ml-auto flex">
            <button type="button" aria-label="최소화" className="flex h-11 w-[70px] items-center justify-center">
              <svg viewBox="0 0 16 16" className="h-4 w-4" stroke="#999"><path d="M0 8.5H15" /></svg>
            </button>
            <button type="button" aria-label="최대화" className="flex h-11 w-[70px] items-center justify-center">
              <svg viewBox="0 0 16 16" className="h-4 w-4" stroke="#999" fill="none"><path d="M.5.5H15.500V15.500H.5Z" /></svg>
            </button>
            <button type="button" aria-label="닫기" className="flex h-11 w-[70px] items-center justify-center">
              <svg viewBox="0 0 16 16" className="h-4 w-4" stroke="#999"><path d="M0 0 16 16M16 0 0 16" /></svg>
            </button>
          </div>
        </div>
        <nav className="flex h-[29px] items-center gap-4 pl-[7px]">
          {MENUS.map((m) => (
            <button key={m} type="button" className="whitespace-nowrap text-lg font-light leading-7 text-[#404040]">{m}</button>
          ))}
        </nav>
      </header>
      <Toolbars />
      <div className="flex min-h-0 flex-1 border-t border-[#a0a0a0]">
        <Sidebar />
        <main className="relative mr-px min-w-0 flex-1 overflow-hidden border-b-2 border-l-2 border-r border-t-2 border-b-white border-l-[#707070] border-r-[#e3e3e3] border-t-[#707070] bg-[#bfbfc8]">
          <Model />
        </main>
      </div>
      <footer className="relative flex h-[37px] shrink-0 items-center pb-px pl-[7px] pr-[32px] font-light text-black">
        <svg viewBox="0 0 22 22" className="h-[22px] w-[22px]">
          <circle cx="11" cy="11" r="10" fill="none" stroke="#999" /><path d="M11 4C5 4 7 10 9 13L10 18H12L13 13C15 10 17 4 11 4Z" fill="#999" />
        </svg>
        <svg viewBox="0 0 22 22" className="ml-[18px] h-[22px] w-[22px]">
          <circle cx="11" cy="11" r="10" fill="none" stroke="#000" strokeWidth="2" /><circle cx="11" cy="6" r="2" /><path d="M8 9H14V14H13V18H9V14H8Z" />
        </svg>
        <div className="ml-3 h-[19px] w-px bg-[#808080]" />
        <p className="ml-[11px] whitespace-nowrap text-xl">끌어서 보기 각도를 회전시킵니다. Shift = 이동(상하/좌우), Control = 중력 해제.</p>
        <div className="ml-auto h-[19px] w-px bg-[#808080]" />
        <label htmlFor="measure" className="ml-[10px] text-xl">단위</label>
        <input id="measure" type="text" className="ml-[9px] h-6 w-[300px] border border-[#a9b9c9] bg-[#eceeef]" />
        <svg viewBox="0 0 12 12" className="absolute bottom-0 right-1 h-3 w-3" fill="#b0b0b0">
          <path d="M8 0h3v3H8ZM4 4h3v3H4ZM8 4h3v3H8ZM0 8h3v3H0ZM4 8h3v3H4ZM8 8h3v3H8Z" />
        </svg>
      </footer>
    </div>
  );
}
